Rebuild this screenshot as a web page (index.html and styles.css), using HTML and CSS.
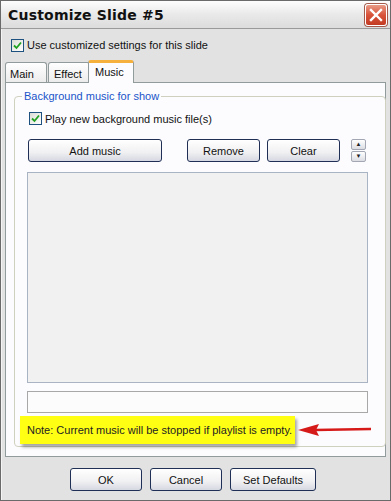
FILE: index.html
```html
<!DOCTYPE html>
<html lang="en">

<head>
  <meta charset="UTF-8" />
  <title>Customize Slide #5</title>
  <link rel="stylesheet" href="styles.css">
</head>

<body>
  <div class="window">
    <div class="titlebar">
      <span class="title">Customize Slide #5</span>
      <button class="close" aria-label="Close">
        <svg width="14" height="14" viewBox="0 0 14 14">
          <path d="M2 2 L12 12 M12 2 L2 12" stroke="#fff" stroke-width="2.4" stroke-linecap="square" />
        </svg>
      </button>
    </div>

    <div class="content">
      <label class="check top-check">
        <span class="box"><svg width="9" height="9" viewBox="0 0 9 9"><path d="M1 4.5 L3.5 7 L8 1.5" fill="none" stroke="#21a121" stroke-width="1.8" /></svg></span>
        Use customized settings for this slide
      </label>

      <div class="tabs">
        <div class="tab main">Main</div>
        <div class="tab effect">Effect</div>
        <div class="tab active">Music</div>
      </div>

      <div class="panel">
        <fieldset class="group">
          <legend>Background music for show</legend>

          <label class="check">
            <span class="box"><svg width="9" height="9" viewBox="0 0 9 9"><path d="M1 4.5 L3.5 7 L8 1.5" fill="none" stroke="#21a121" stroke-width="1.8" /></svg></span>
            Play new background music file(s)
          </label>

          <div class="toolbar">
            <button class="btn add">Add music</button>
            <button class="btn remove">Remove</button>
            <button class="btn clear">Clear</button>
            <div class="spin">
              <span class="spin-btn">&#9650;</span>
              <span class="spin-btn">&#9660;</span>
            </div>
          </div>

          <div class="playlist"></div>
          <div class="textbox"></div>

          <div class="note-row">
            <div class="note">Note: Current music will be stopped if playlist is empty.</div>
            <svg class="arrow" width="76" height="16" viewBox="0 0 76 16">
              <path d="M18 8 L74 7" stroke="#d61a1a" stroke-width="2.5" />
              <path d="M1 8 L22 2 L19 8 L22 14 Z" fill="#d61a1a" />
            </svg>
          </div>
        </fieldset>
      </div>

      <div class="footer">
        <button class="btn">OK</button>
        <button class="btn">Cancel</button>
        <button class="btn wide">Set Defaults</button>
      </div>
    </div>
  </div>
</body>

</html>
```

FILE: styles.css
```css
* {
  margin: 0;
  padding: 0;
  box-sizing: border-box;
  font-family: Tahoma, "Liberation Sans", sans-serif;
}

body {
  background: #fff;
  width: 391px;
  height: 501px;
  overflow: hidden;
}

.window {
  width: 391px;
  height: 501px;
  border: 1px solid #6a6a6a;
  background: #e2e2e2;
  display: flex;
  flex-direction: column;
}

.titlebar {
  height: 28px;
  background: linear-gradient(to bottom, #fdfdfd, #e9e9e9 50%, #dcdcdc);
  border-bottom: 1px solid #9a9a9a;
  display: flex;
  align-items: center;
  justify-content: space-between;
  padding: 0 3px 0 7px;
}

.title {
  font-family: "DejaVu Sans", sans-serif;
  font-weight: bold;
  font-size: 14px;
  color: #111;
  letter-spacing: 0.2px;
}

.close {
  width: 22px;
  height: 22px;
  border: 1px solid #fff;
  border-radius: 3px;
  background: linear-gradient(to bottom, #e99a86, #d8533a 50%, #c23a22);
  box-shadow: 0 0 0 1px #a45a4a;
  display: flex;
  align-items: center;
  justify-content: center;
}

.content {
  flex: 1;
  display: flex;
  flex-direction: column;
  padding: 0 4px 0 3px;
  border-left: 1px solid #f4f4f4;
}

.check {
  display: flex;
  align-items: center;
  gap: 3px;
  font-size: 11px;
  color: #111;
}

.top-check {
  margin: 9px 0 0 6px;
  height: 14px;
}

.box {
  width: 13px;
  height: 13px;
  border: 1px solid #1c5180;
  background: linear-gradient(135deg, #dcdcd6, #fff);
  display: flex;
  align-items: center;
  justify-content: center;
}

.tabs {
  display: flex;
  align-items: flex-end;
  margin-top: 8px;
  height: 22px;
}

.tab {
  height: 20px;
  padding: 5px 0 0 4px;
  font-size: 11px;
  color: #111;
  border: 1px solid #919b9c;
  border-bottom: none;
  border-radius: 3px 3px 0 0;
  background: linear-gradient(to bottom, #fff, #ececec);
  margin-right: 1px;
}

.tab.main {
  width: 42px;
}

.tab.effect {
  width: 42px;
  padding-left: 5px;
}

.tab.active {
  width: 46px;
  height: 23px;
  padding: 3px 0 0 6px;
  background: #fcfcfe;
  border-top: 3px solid #f6b13c;
  margin-left: -3px;
  margin-bottom: -1px;
  position: relative;
}

.panel {
  height: 375px;
  background: #fcfcfe;
  border: 1px solid #919b9c;
  padding: 7px 5px 0 8px;
}

.group {
  border: 1px solid #d0d0bf;
  border-radius: 4px;
  height: 357px;
  padding: 0 12px 0 6px;
}

.group legend {
  margin-left: 1px;
  padding: 0 2px;
  color: #1a54c9;
  font-size: 11px;
}

.group .check {
  margin: 10px 0 0 8px;
}

.toolbar {
  display: flex;
  align-items: flex-start;
  margin: 14px 0 0 7px;
  height: 23px;
}

.btn {
  height: 23px;
  width: 73px;
  border: 1px solid #1f2f55;
  border-radius: 3px;
  background: linear-gradient(to bottom, #ffffff, #f0f0f2 60%, #d6d8e2);
  font-size: 11px;
  color: #111;
}

.btn.add {
  width: 134px;
}

.btn.remove {
  margin-left: 25px;
}

.btn.clear {
  margin-left: 7px;
}

.spin {
  margin-left: 11px;
  display: flex;
  flex-direction: column;
  gap: 1px;
}

.spin-btn {
  width: 15px;
  height: 11px;
  border: 1px solid #a2a7b3;
  border-radius: 2px;
  background: linear-gradient(to bottom, #fff, #dcdde3);
  font-size: 6px;
  line-height: 9px;
  text-align: center;
  color: #222;
}

.playlist {
  margin: 10px 0 0 6px;
  height: 211px;
  width: 341px;
  background: #f1f1f1;
  border: 1px solid #a8b3c4;
}

.textbox {
  margin: 8px 0 0 6px;
  height: 22px;
  width: 341px;
  background: #fcfcfc;
  border: 1px solid #a8a8a8;
}

.note-row {
  display: flex;
  align-items: center;
  margin-top: 3px;
}

.note {
  background: #ffff14;
  height: 28px;
  width: 275px;
  margin-left: -1px;
  padding: 0 0 0 7px;
  display: flex;
  align-items: center;
  font-size: 11px;
  white-space: nowrap;
  color: #222;
  box-shadow: 2px 3px 3px rgba(0, 0, 0, 0.35);
}

.arrow {
  margin-left: 2px;
}

.footer {
  display: flex;
  justify-content: center;
  gap: 8px;
  padding: 11px 5px 0 0;
}

.footer .btn {
  width: 72px;
}

.footer .btn.wide {
  width: 86px;
}
```
